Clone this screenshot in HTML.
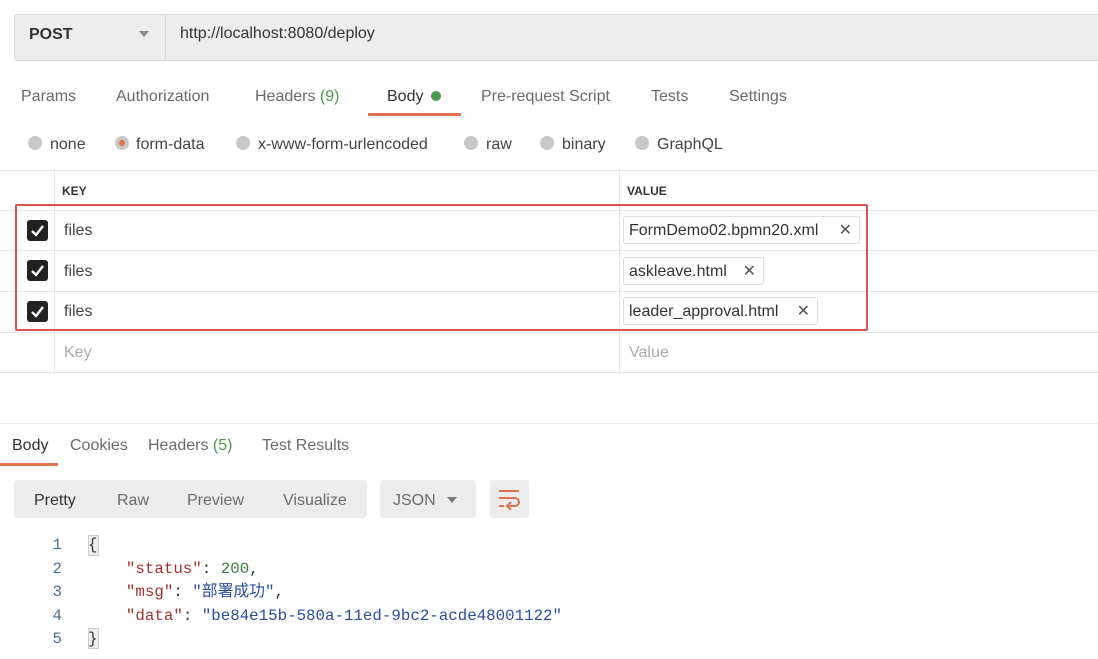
<!DOCTYPE html>
<html><head><meta charset="utf-8"><style>
body{margin:0;width:1098px;height:659px;background:#fff;font-family:"Liberation Sans","Noto Sans CJK SC",sans-serif;position:relative;overflow:hidden;color:#505050}
.a{position:absolute;white-space:nowrap}
.t{font-size:16px;color:#6b6b6b}
.r{width:14px;height:14px;border-radius:50%;background:#c8c8c8;position:absolute}
.hl{position:absolute;height:1px;background:#e6e6e6;left:0;width:1098px}
.cb{position:absolute;left:27px;width:21px;height:21px;background:#222;border-radius:3px}
.cb svg{position:absolute;left:3px;top:3px}
.chip{position:absolute;left:623px;height:26px;border:1px solid #ddd;border-radius:3px;font-size:16px;color:#333;line-height:28px;padding-left:5px}
.mono{font-family:"Liberation Mono","Noto Sans CJK SC",monospace;font-size:15.8px}
</style></head><body>
<div class="a" style="left:14px;top:14px;width:1090px;height:45px;background:#ededed;border:1px solid #d9d9d9;border-radius:3px"></div>
<div class="a" style="left:165px;top:15px;width:1px;height:45px;background:#dadada"></div>
<div class="a" style="left:29px;top:26px;font-size:16px;font-weight:bold;color:#333">POST</div>
<div class="a" style="left:139px;top:31px;width:0;height:0;border-left:5px solid transparent;border-right:5px solid transparent;border-top:6px solid #888"></div>
<div class="a" style="left:180px;top:25px;font-size:16px;color:#333">http://localhost:8080/deploy</div>

<div class="a t" style="left:21px;top:88px">Params</div>
<div class="a t" style="left:116px;top:88px">Authorization</div>
<div class="a t" style="left:255px;top:88px">Headers <span style="color:#4a9a4a">(9)</span></div>
<div class="a t" style="left:387px;top:88px;color:#333">Body</div>
<div class="a" style="left:431px;top:91px;width:10px;height:10px;border-radius:50%;background:#4b9b4b"></div>
<div class="a" style="left:368px;top:113px;width:93px;height:3px;background:#e0714e"></div>
<div class="a t" style="left:481px;top:88px">Pre-request Script</div>
<div class="a t" style="left:651px;top:88px">Tests</div>
<div class="a t" style="left:729px;top:88px">Settings</div>

<div class="r" style="left:28px;top:136px"></div><div class="a t" style="left:50px;top:136px;color:#444">none</div>
<div class="r" style="left:115px;top:136px"></div><div class="a" style="left:119px;top:140px;width:6px;height:6px;border-radius:50%;background:#e0714e"></div><div class="a t" style="left:136px;top:136px;color:#444">form-data</div>
<div class="r" style="left:236px;top:136px"></div><div class="a t" style="left:258px;top:136px;color:#444">x-www-form-urlencoded</div>
<div class="r" style="left:464px;top:136px"></div><div class="a t" style="left:486px;top:136px;color:#444">raw</div>
<div class="r" style="left:540px;top:136px"></div><div class="a t" style="left:562px;top:136px;color:#444">binary</div>
<div class="r" style="left:635px;top:136px"></div><div class="a t" style="left:657px;top:136px;color:#444">GraphQL</div>

<div class="hl" style="top:170px"></div>
<div class="hl" style="top:210px"></div>
<div class="hl" style="top:250px"></div>
<div class="hl" style="top:291px"></div>
<div class="hl" style="top:332px"></div>
<div class="hl" style="top:372px"></div>
<div class="a" style="left:54px;top:170px;width:1px;height:202px;background:#e6e6e6"></div>
<div class="a" style="left:619px;top:170px;width:1px;height:202px;background:#e6e6e6"></div>
<div class="a" style="left:62px;top:184px;font-size:12px;font-weight:bold;color:#333">KEY</div>
<div class="a" style="left:627px;top:184px;font-size:12px;font-weight:bold;color:#333">VALUE</div>

<div class="cb" style="top:220px"><svg width="15" height="15" viewBox="0 0 15 15"><path d="M2 8 L6 12 L13 3" stroke="#fff" stroke-width="2.4" fill="none"/></svg></div>
<div class="cb" style="top:260px"><svg width="15" height="15" viewBox="0 0 15 15"><path d="M2 8 L6 12 L13 3" stroke="#fff" stroke-width="2.4" fill="none"/></svg></div>
<div class="cb" style="top:301px"><svg width="15" height="15" viewBox="0 0 15 15"><path d="M2 8 L6 12 L13 3" stroke="#fff" stroke-width="2.4" fill="none"/></svg></div>
<div class="a t" style="left:64px;top:222px;color:#444">files</div>
<div class="a t" style="left:64px;top:263px;color:#444">files</div>
<div class="a t" style="left:64px;top:303px;color:#444">files</div>
<div class="chip" style="top:216px;width:230px">FormDemo02.bpmn20.xml<span style="position:absolute;right:7px;color:#555">✕</span></div>
<div class="chip" style="top:257px;width:134px">askleave.html<span style="position:absolute;right:7px;color:#555">✕</span></div>
<div class="chip" style="top:297px;width:188px">leader_approval.html<span style="position:absolute;right:7px;color:#555">✕</span></div>
<div class="a t" style="left:64px;top:344px;color:#aaa">Key</div>
<div class="a t" style="left:629px;top:344px;color:#aaa">Value</div>
<div class="a" style="left:15px;top:204px;width:849px;height:123px;border:2px solid #d9534f;border-radius:2px"></div>

<div class="hl" style="top:423px;background:#ececec"></div>
<div class="a t" style="left:12px;top:437px;color:#333">Body</div>
<div class="a" style="left:0;top:463px;width:58px;height:3px;background:#e0714e"></div>
<div class="a t" style="left:70px;top:437px">Cookies</div>
<div class="a t" style="left:148px;top:437px">Headers <span style="color:#4a9a4a">(5)</span></div>
<div class="a t" style="left:262px;top:437px">Test Results</div>

<div class="a" style="left:14px;top:480px;width:353px;height:38px;background:#ececec;border-radius:3px"></div>
<div class="a t" style="left:34px;top:492px;color:#333">Pretty</div>
<div class="a t" style="left:117px;top:492px">Raw</div>
<div class="a t" style="left:187px;top:492px">Preview</div>
<div class="a t" style="left:283px;top:492px">Visualize</div>
<div class="a" style="left:380px;top:480px;width:96px;height:38px;background:#ececec;border-radius:3px"></div>
<div class="a t" style="left:393px;top:492px">JSON</div>
<div class="a" style="left:447px;top:497px;width:0;height:0;border-left:5px solid transparent;border-right:5px solid transparent;border-top:6px solid #777"></div>
<div class="a" style="left:490px;top:480px;width:39px;height:38px;background:#ececec;border-radius:3px"></div>
<svg class="a" style="left:498px;top:488px" width="24" height="22" viewBox="0 0 24 22"><path d="M1 3 H21 M1 10 H17 A4 4 0 0 1 17 18 H10 M13 14 L9 18 L13 22 M1 18 H6" stroke="#e0714e" stroke-width="2" fill="none"/></svg>

<div class="a mono" style="left:49px;top:534px;color:#4f6f8f;line-height:23.5px;text-align:right;width:13px">1<br>2<br>3<br>4<br>5</div>
<div class="a" style="left:88px;top:535px;width:9px;height:19px;background:#eee;border:1px solid #ccc"></div>
<div class="a" style="left:88px;top:628px;width:9px;height:19px;background:#eee;border:1px solid #ccc"></div>
<div class="a mono" style="left:88px;top:534px;line-height:23.5px;color:#333">{<br>&nbsp;&nbsp;&nbsp;&nbsp;<span style="color:#a3312f">"status"</span>: <span style="color:#3d7a3d">200</span>,<br>&nbsp;&nbsp;&nbsp;&nbsp;<span style="color:#a3312f">"msg"</span>: <span style="color:#2a4ea0">"部署成功"</span>,<br>&nbsp;&nbsp;&nbsp;&nbsp;<span style="color:#a3312f">"data"</span>: <span style="color:#2a4ea0">"be84e15b-580a-11ed-9bc2-acde48001122"</span><br>}</div>
</body></html>
